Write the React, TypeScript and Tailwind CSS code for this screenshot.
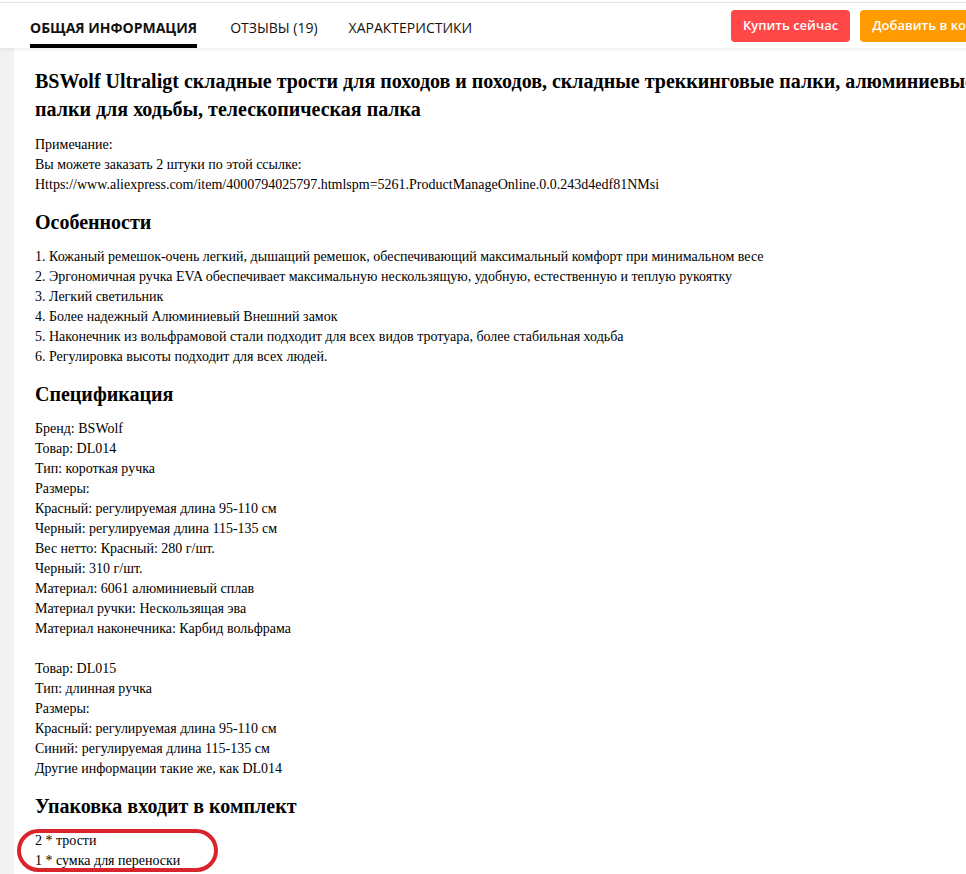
import React from 'react';

const features = [
  '1. Кожаный ремешок-очень легкий, дышащий ремешок, обеспечивающий максимальный комфорт при минимальном весе',
  '2. Эргономичная ручка EVA обеспечивает максимальную нескользящую, удобную, естественную и теплую рукоятку',
  '3. Легкий светильник',
  '4. Более надежный Алюминиевый Внешний замок',
  '5. Наконечник из вольфрамовой стали подходит для всех видов тротуара, более стабильная ходьба',
  '6. Регулировка высоты подходит для всех людей.',
];

const specs = [
  'Бренд: BSWolf',
  'Товар: DL014',
  'Тип: короткая ручка',
  'Размеры:',
  'Красный: регулируемая длина 95-110 см',
  'Черный: регулируемая длина 115-135 см',
  'Вес нетто: Красный: 280 г/шт.',
  'Черный: 310 г/шт.',
  'Материал: 6061 алюминиевый сплав',
  'Материал ручки: Нескользящая эва',
  'Материал наконечника: Карбид вольфрама',
  '',
  'Товар: DL015',
  'Тип: длинная ручка',
  'Размеры:',
  'Красный: регулируемая длина 95-110 см',
  'Синий: регулируемая длина 115-135 см',
  'Другие информации такие же, как DL014',
];

function Heading({ children }: { children: React.ReactNode }) {
  return <h2 className="mt-[13px] mb-[11px] text-[20px] font-bold leading-[28px]">{children}</h2>;
}

function Lines({ items }: { items: string[] }) {
  return (
    <div className="text-[14px] leading-[20px]">
      {items.map((t, i) => (
        <p key={i} className="h-[20px]">{t}</p>
      ))}
    </div>
  );
}

export default function App() {
  return (
    <div className="w-[966px] h-[874px] overflow-hidden bg-white">
      <div className="w-[1037px]">
        {/* tab bar */}
        <div className="mt-[2px] border-t border-[#e4e4e4] bg-white shadow-[0_2px_3px_rgba(0,0,0,0.06)] relative z-10">
          <div className="flex items-center h-[45px] pl-[30px] pr-[20px] font-['Open_Sans',sans-serif] text-[14px] text-[#111]">
            <div className="relative h-full flex items-center pt-[3px] font-bold">
              ОБЩАЯ ИНФОРМАЦИЯ
              <span className="absolute left-0 right-0 bottom-0 h-[4px] bg-black" />
            </div>
            <div className="ml-[33px] pt-[3px]">ОТЗЫВЫ (19)</div>
            <div className="ml-[31px] pt-[3px]">ХАРАКТЕРИСТИКИ</div>
            <div className="ml-auto flex gap-[10px]">
              <button className="h-[32px] px-[12px] rounded-[4px] bg-[#ff4747] text-white text-[13px] font-semibold">
                Купить сейчас
              </button>
              <button className="h-[32px] px-[12px] rounded-[4px] bg-[#ff9a00] text-white text-[13px] font-semibold">
                Добавить в корзину
              </button>
            </div>
          </div>
        </div>

        {/* body */}
        <div className="flex">
          <div className="w-[14px] shrink-0 bg-[#f2f2f2] min-h-[830px]" />
          <div className="flex-1 pl-[21px] pr-[40px] pt-[19px] font-['Liberation_Serif',serif] text-black">
            <h1 className="text-[20px] font-bold leading-[28px] mb-[12px]">
              BSWolf Ultraligt складные трости для походов и походов, складные треккинговые палки, алюминиевые палки для ходьбы, телескопическая палка
            </h1>
            <Lines
              items={[
                'Примечание:',
                'Вы можете заказать 2 штуки по этой ссылке:',
                'Https://www.aliexpress.com/item/4000794025797.htmlspm=5261.ProductManageOnline.0.0.243d4edf81NMsi',
              ]}
            />
            <Heading>Особенности</Heading>
            <Lines items={features} />
            <Heading>Спецификация</Heading>
            <Lines items={specs} />
            <Heading>Упаковка входит в комплект</Heading>
            <div className="relative">
              <Lines items={['2 * трости', '1 * сумка для переноски']} />
              {/* red marker around the package list */}
              <div className="absolute left-[-18px] top-[-2px] w-[201px] h-[43px] rounded-[22px] border-[4px] border-[#d9242c]" />
            </div>
          </div>
        </div>
      </div>
    </div>
  );
}
